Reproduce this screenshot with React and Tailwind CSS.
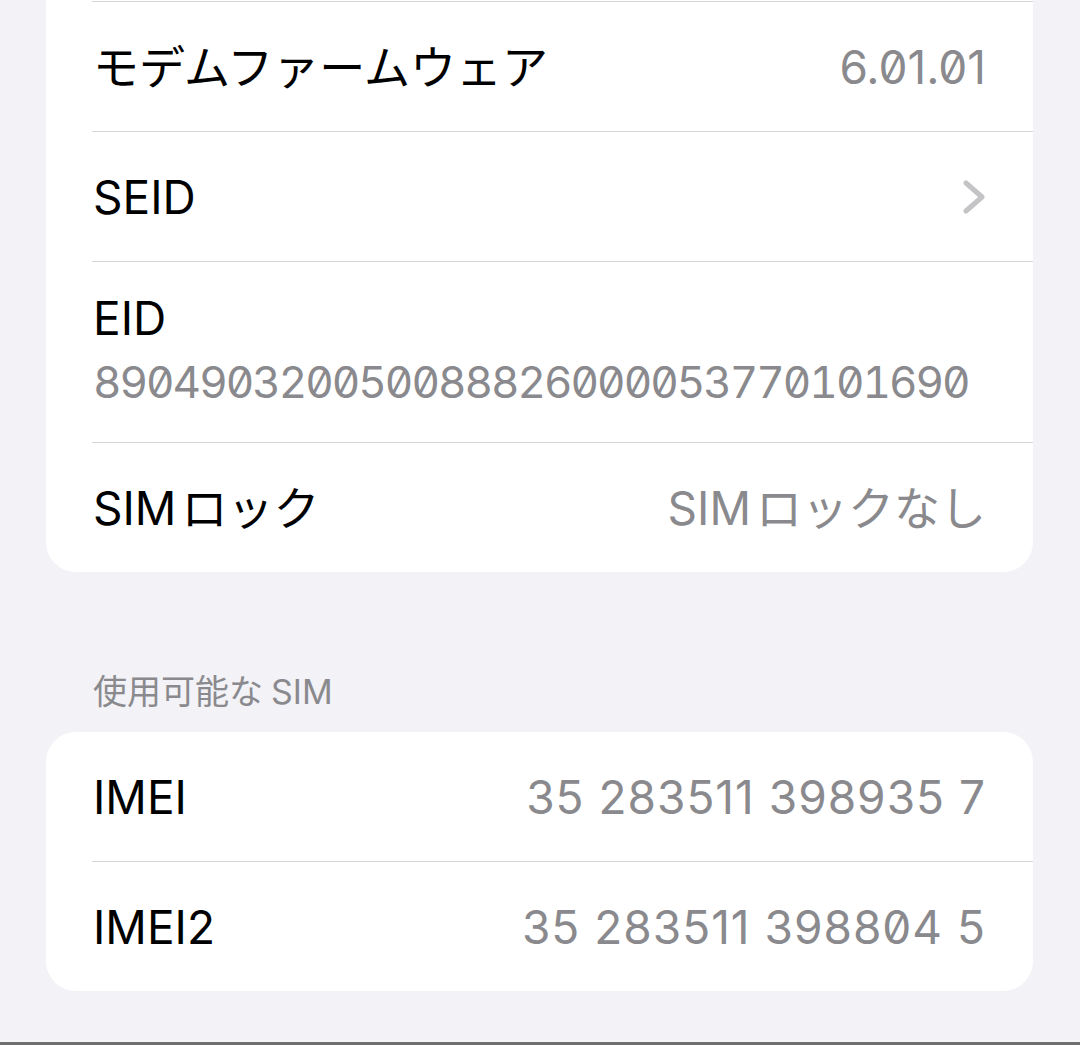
const sans = "font-['Inter','Noto_Sans_CJK_JP',sans-serif]"

const Chevron = () => (
  <svg width="23" height="34" viewBox="0 0 23 34" fill="none">
    <path
      d="M3 3 L19 17 L3 31"
      stroke="#c4c4c7"
      strokeWidth="5"
      strokeLinecap="round"
      strokeLinejoin="round"
    />
  </svg>
)

const Separator = () => <div className="ml-[46px] h-px bg-[#d6d6da]" />

const Row = ({ label, value, chevron, wide }) => (
  <div className="flex h-[129px] items-center justify-between pl-[47px] pr-[47px]">
    <span className="text-[46px] leading-none text-black">{label}</span>
    {chevron ? (
      <Chevron />
    ) : (
      <span
        className={`text-[46px] leading-none text-[#8a8a8e] [font-feature-settings:'zero'] ${
          wide ? "tracking-[1px]" : ""
        }`}
      >
        {value}
      </span>
    )}
  </div>
)

const SimLock = ({ suffix }) => (
  <>
    SIM<span className="ml-[5px]">ロック{suffix}</span>
  </>
)

const App = () => {
  return (
    <div className={`${sans} flex h-[1045px] flex-col overflow-hidden bg-[#f2f2f7]`}>
      {/* top card, cut off at the top of the screen */}
      <div className="mx-[46px] w-[987px] rounded-b-[30px] bg-white">
        <div className="h-px" />
        <Separator />
        <Row label="モデムファームウェア" value="6.01.01" />
        <Separator />
        <Row label="SEID" chevron />
        <Separator />
        <div className="h-[180px] pl-[47px] pt-[28px]">
          <div className="text-[46px] leading-[56px] text-black">EID</div>
          <div className="text-[44px] leading-[72px] text-[#8a8a8e] tabular-nums tracking-[-2px] [font-feature-settings:'zero','tnum']">
            890490320050088826000053770101690
          </div>
        </div>
        <Separator />
        <Row label={<SimLock />} value={<SimLock suffix="なし" />} />
      </div>

      {/* section header */}
      <div className="pl-[93px] pt-[99px] pb-[20px] text-[34px] leading-[41px] text-[#8a8a8e]">
        使用可能な<span className="ml-[8px]">SIM</span>
      </div>

      <div className="mx-[46px] w-[987px] rounded-[30px] bg-white">
        <Row label="IMEI" value="35 283511 398935 7" wide />
        <Separator />
        <Row label="IMEI2" value="35 283511 398804 5" wide />
      </div>

      <div className="flex-1" />
      <div className="h-px bg-[#f7f7fa]" />
      <div className="h-[3px] bg-[#6f6f6f]" />
    </div>
  )
}

export default App
